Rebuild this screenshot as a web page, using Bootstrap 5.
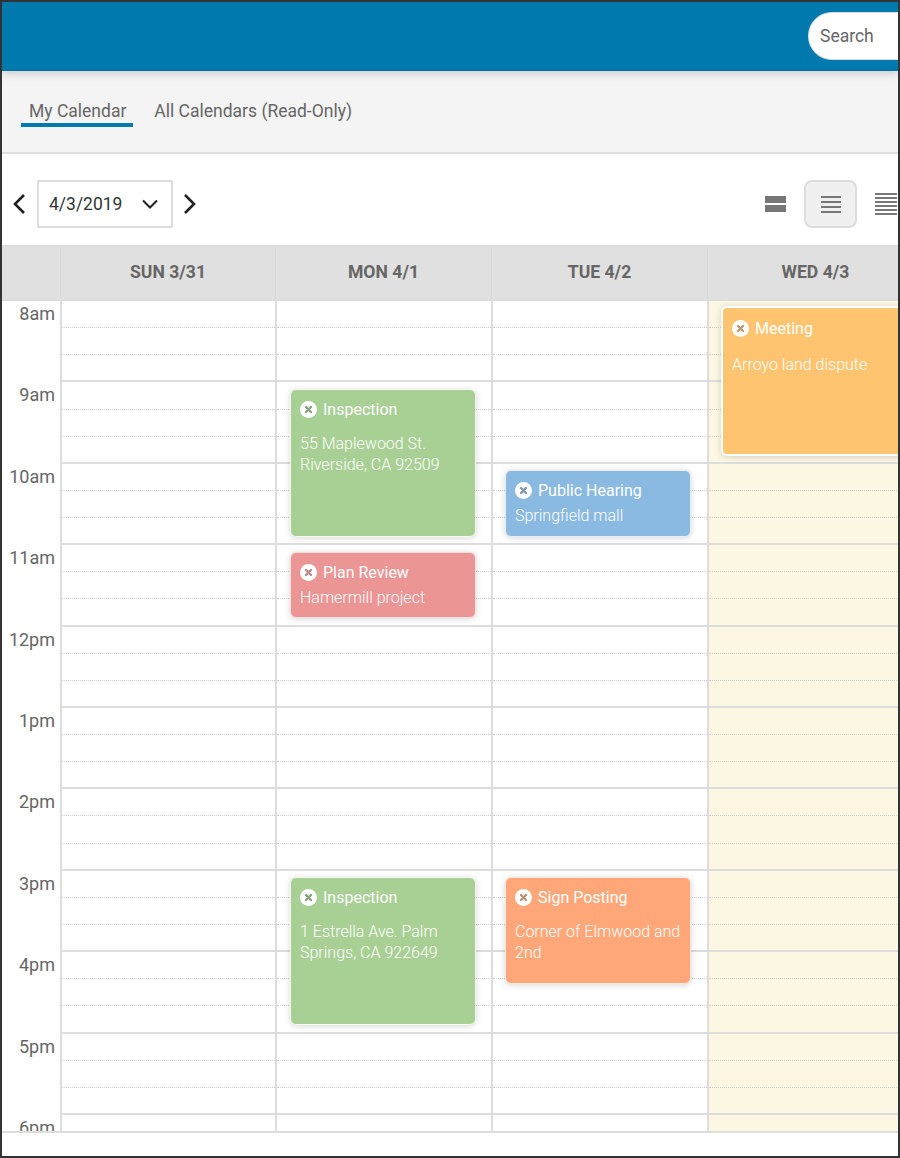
<!DOCTYPE html>
<html lang="en">
<head>
<meta charset="utf-8">
<title>Calendar</title>
<link href="https://cdn.jsdelivr.net/npm/bootstrap@5.3.0/dist/css/bootstrap.min.css" rel="stylesheet">
<style>
html,body{height:1158px;overflow:hidden}
body{font-family:Roboto,"Liberation Sans",sans-serif;color:#666;background:#fff}
.frame{height:1158px;width:900px;border:2px solid #333;overflow:hidden;position:relative;background:#fff}
.topbar{height:69px;background:#0079ae;border-bottom:1px solid #0a6d9b;padding-top:10px;position:relative;z-index:2;box-shadow:0 3px 8px rgba(0,0,0,.16)}
.searchbox{width:120px;height:48px;background:#fff;border:1px solid #ddd;border-right:0;border-radius:24px 0 0 24px;font-size:17.5px;line-height:46px;padding-left:11px;margin-right:-30px;color:#666}
.tabbar{height:83px;background:#f4f4f4;border-bottom:2px solid #e0e0e0;padding:27px 0 0 19px;gap:4px}
.tabitem{font-size:17.5px;line-height:26px;height:29px;padding:0 7px 0 8px;color:#666;text-decoration:none}
.tabitem.on{border-bottom:4px solid #0079ae}
.tabitem.off{margin-left:13px;padding:0 4px}
.toolbar{height:91px;padding:26px 0 0 8px}
.arrow{width:20px;height:28px;flex:none}
.datebox{width:136px;height:48px;border:2px solid #ddd;font-size:17.5px;color:#333;line-height:44px;padding:0 13px 0 10px;margin:0 7px 0 7px}
.viewbtn{height:48px;width:53px}
.viewbtn.on{background:#f0f0f0;border:2px solid #ddd;border-radius:8px}
.viewrow{margin-right:-14px;gap:2px}
.headrow,.bodyrow{display:grid;grid-template-columns:58px 215px repeat(3,216px);width:921px}
.headrow{height:56px;background:#e0e0e0;border-top:2px solid #ddd;border-bottom:2px solid #ddd}
.headcell{font-size:17.6px;font-weight:700;color:#666;text-align:center;line-height:50px;border-left:1px solid #d8d8d8}
.headcell:first-child{border-left:0}
.scroller{height:832px;overflow:hidden;border-bottom:2px solid #ddd}
.daycol{position:relative;border-left:2px solid #ddd}
.daycol.today{background:#fcf7e3}
.hourrow{height:81.4px;border-bottom:2px solid #ddd;box-sizing:border-box;display:flex;flex-direction:column}
.halfslot{height:27.13px;flex:none;border-bottom:1px dotted #d0d0d0}
.halfslot.last{border-bottom:0}
.timecol{font-size:18px;color:#666;text-align:right;padding-right:5px}
.timelabel{height:81.4px;line-height:26px;overflow:hidden}
.evt{position:absolute;left:13px;width:186px;color:#fff;border:1px solid #fff;border-radius:6px;box-shadow:0 1px 6px rgba(0,0,0,.16);padding:9px 9px 0;font-size:16px;line-height:21px;font-weight:300}
.evt-title{display:flex;align-items:center;gap:6px;font-weight:400;font-size:16px;height:21px}
.evt-title svg{width:17px;height:17px;flex:none}
.evt-body{margin-top:4px}
.evt-body.far{margin-top:13px}
.green{background:#a8d094;border-color:#f4f9f1;color:#fff}
.green svg{color:#8ba07f}
.red{background:#ec9595;border-color:#f9e0e0}
.red svg{color:#b98585}
.blue{background:#8ab9e2;border-color:#e6f0f9;left:12px}
.blue svg{color:#7f98ae}
.orange{background:#ffa778;border-color:#ffe9dc;left:12px}
.orange svg{color:#bb8f76}
.amber{background:#ffc470;border-color:#fff;border-width:2px;width:240px;left:12px;padding-top:10px}
.amber svg{color:#b7996f}
.amber .evt-body.far{margin-top:15px}
</style>
</head>
<body>
<svg width="0" height="0" class="d-block" aria-hidden="true"><defs>
<symbol id="xc" viewBox="0 0 17 17"><circle cx="8.5" cy="8.5" r="8.5" fill="#fff"/><path d="M6 6l5 5M11 6l-5 5" stroke="currentColor" stroke-width="2.4" stroke-linecap="round"/></symbol>
</defs></svg>
<div class="frame">
  <div class="topbar d-flex justify-content-end">
    <div class="searchbox">Search</div>
  </div>
  <div class="tabbar d-flex align-items-start">
    <a class="tabitem on" href="#">My Calendar</a>
    <a class="tabitem off" href="#">All Calendars (Read-Only)</a>
  </div>
  <div class="toolbar d-flex align-items-start justify-content-between">
    <div class="d-flex align-items-center">
      <svg class="arrow" viewBox="0 0 20 28"><path d="M14 5l-9 9 9 9" fill="none" stroke="#222" stroke-width="2.6"/></svg>
      <div class="datebox d-flex justify-content-between align-items-center"><span>4/3/2019</span>
        <svg width="16" height="10" viewBox="0 0 16 10"><path d="M1 1.5l7 7 7-7" fill="none" stroke="#222" stroke-width="2"/></svg></div>
      <svg class="arrow" viewBox="0 0 20 28"><path d="M5 5l9 9-9 9" fill="none" stroke="#222" stroke-width="2.6"/></svg>
    </div>
    <div class="viewrow d-flex align-items-center">
      <div class="viewbtn d-flex align-items-center justify-content-center"><svg width="21" height="16" viewBox="0 0 21 16"><rect width="21" height="7" fill="#777"/><rect y="9" width="21" height="7" fill="#777"/></svg></div>
      <div class="viewbtn on d-flex align-items-center justify-content-center"><svg width="20" height="17" viewBox="0 0 20 17"><path d="M0 1h20M0 6h20M0 11h20M0 16h20" stroke="#777" stroke-width="2"/></svg></div>
      <div class="viewbtn d-flex align-items-center justify-content-center"><svg width="22" height="23" viewBox="0 0 22 23"><path d="M0 1h22M0 5h22M0 9h22M0 13h22M0 17h22M0 21h22" stroke="#777" stroke-width="2"/></svg></div>
    </div>
  </div>
  <div class="headrow">
    <div class="headcell"></div>
    <div class="headcell">SUN 3/31</div>
    <div class="headcell">MON 4/1</div>
    <div class="headcell">TUE 4/2</div>
    <div class="headcell">WED 4/3</div>
  </div>
  <div class="scroller">
    <div class="bodyrow" id="grid">
      <div class="timecol">
        <div class="timelabel">8am</div><div class="timelabel">9am</div><div class="timelabel">10am</div><div class="timelabel">11am</div><div class="timelabel">12pm</div><div class="timelabel">1pm</div><div class="timelabel">2pm</div><div class="timelabel">3pm</div><div class="timelabel">4pm</div><div class="timelabel">5pm</div><div class="timelabel">6pm</div>
      </div>
      <div class="daycol" data-hours></div>
      <div class="daycol" data-hours>
        <div class="evt green" style="top:88px;height:148px"><div class="evt-title"><svg><use href="#xc"/></svg>Inspection</div><div class="evt-body far">55 Maplewood St.<br>Riverside, CA 92509</div></div>
        <div class="evt red" style="top:251px;height:66px"><div class="evt-title"><svg><use href="#xc"/></svg>Plan Review</div><div class="evt-body">Hamermill project</div></div>
        <div class="evt green" style="top:576px;height:148px"><div class="evt-title"><svg><use href="#xc"/></svg>Inspection</div><div class="evt-body far">1 Estrella Ave. Palm<br>Springs, CA 922649</div></div>
      </div>
      <div class="daycol" data-hours>
        <div class="evt blue" style="top:169px;height:67px"><div class="evt-title"><svg><use href="#xc"/></svg>Public Hearing</div><div class="evt-body">Springfield mall</div></div>
        <div class="evt orange" style="top:576px;height:107px"><div class="evt-title"><svg><use href="#xc"/></svg>Sign Posting</div><div class="evt-body far">Corner of Elmwood and<br>2nd</div></div>
      </div>
      <div class="daycol today" data-hours>
        <div class="evt amber" style="top:5px;height:150px"><div class="evt-title"><svg><use href="#xc"/></svg>Meeting</div><div class="evt-body far">Arroyo land dispute</div></div>
      </div>
    </div>
  </div>
</div>
<script>
document.querySelectorAll('[data-hours]').forEach(function(c){
  var h='';
  for(var i=0;i<11;i++){h+='<div class="hourrow"><div class="halfslot"></div><div class="halfslot"></div><div class="halfslot last"></div></div>';}
  c.insertAdjacentHTML('afterbegin',h);
});
</script>
<script src="https://cdn.jsdelivr.net/npm/bootstrap@5.3.0/dist/js/bootstrap.bundle.min.js"></script>
</body>
</html>
